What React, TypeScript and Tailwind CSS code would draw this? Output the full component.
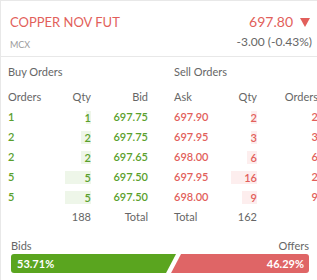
import React from "react";

const buys = [
  { orders: 1, qty: 1, price: "697.75" },
  { orders: 2, qty: 2, price: "697.75" },
  { orders: 2, qty: 2, price: "697.65" },
  { orders: 5, qty: 5, price: "697.50" },
  { orders: 5, qty: 5, price: "697.50" },
];
const sells = [
  { orders: 2, qty: 2, price: "697.90" },
  { orders: 3, qty: 3, price: "697.95" },
  { orders: 6, qty: 6, price: "698.00" },
  { orders: 2, qty: 16, price: "697.95" },
  { orders: 9, qty: 9, price: "698.00" },
];

export default function App() {
  const maxBuy = Math.max(...buys.map((b) => b.qty));
  const maxSell = Math.max(...sells.map((s) => s.qty));
  return (
    <div className="w-[317px] h-[280px] bg-white border-l border-t border-[#e8e8e8] overflow-hidden font-['Lato',sans-serif] text-[#666]">
      <div className="h-[56px] border-b border-[#e8e8e8] flex justify-between pl-[9px] pr-[7px] pt-[12px]">
        <div className="flex flex-col">
          <div className="text-[13px] leading-[18px] text-[#e25f5b]">COPPER NOV FUT</div>
          <div className="text-[9px] leading-[12px] mt-[8px] text-[#9b9b9b]">MCX</div>
        </div>
        <div className="flex flex-col items-end">
          <div className="flex items-center text-[14px] leading-[18px] text-[#e25f5b]">
            <span>697.80</span>
            <svg width="10" height="9" viewBox="0 0 10 9" className="ml-[7px]">
              <path d="M0 0 L10 0 L5 9 Z" fill="#e25f5b" />
            </svg>
          </div>
          <div className="text-[12px] leading-[14px] mt-[4px] mr-[-2px] text-[#666]">-3.00 (-0.43%)</div>
        </div>
      </div>

      <div className="flex pl-[7px]">
        <div className="w-[140px] shrink-0">
          <div className="text-[11px] leading-[20px] mt-[5px]">Buy Orders</div>
          <div className="grid grid-cols-[40px_43px_57px] text-[11px] leading-[20px] mt-[5px]">
            <div>Orders</div>
            <div className="text-right">Qty</div>
            <div className="text-right">Bid</div>
          </div>
          {buys.map((b, i) => (
            <div key={i} className="grid grid-cols-[40px_43px_57px] text-[11px] leading-[20px] font-semibold text-[#5aa02c]">
              <div>{b.orders}</div>
              <div className="flex justify-end items-center">
                <div className="relative flex justify-end items-center h-[13px]">
                  <div className="absolute right-0 top-0 h-[13px] bg-[#eef6e9]" style={{ width: `${(b.qty / maxBuy) * 26}px` }} />
                  <span className="relative leading-[13px]">{b.qty}</span>
                </div>
              </div>
              <div className="text-right">{b.price}</div>
            </div>
          ))}
          <div className="grid grid-cols-[40px_43px_57px] text-[11px] leading-[20px]">
            <div></div>
            <div className="text-right">188</div>
            <div className="text-right">Total</div>
          </div>
        </div>
        <div className="w-[144px] shrink-0 ml-[26px]">
          <div className="text-[11px] leading-[20px] mt-[5px]">Sell Orders</div>
          <div className="grid grid-cols-[50px_33px_61px] text-[11px] leading-[20px] mt-[5px]">
            <div>Ask</div>
            <div className="text-right">Qty</div>
            <div className="text-right">Orders</div>
          </div>
          {sells.map((s, i) => (
            <div key={i} className="grid grid-cols-[50px_33px_61px] text-[11px] leading-[20px] font-semibold text-[#e25f5b]">
              <div>{s.price}</div>
              <div className="flex justify-end items-center">
                <div className="relative flex justify-end items-center h-[13px]">
                  <div className="absolute right-0 top-0 h-[13px] bg-[#fdeeee]" style={{ width: `${Math.max((s.qty / maxSell) * 26, 6)}px` }} />
                  <span className="relative leading-[13px]">{s.qty}</span>
                </div>
              </div>
              <div className="text-right">{s.orders}</div>
            </div>
          ))}
          <div className="grid grid-cols-[50px_33px_61px] text-[11px] leading-[20px]">
            <div>Total</div>
            <div className="text-right">162</div>
            <div></div>
          </div>
        </div>
      </div>

      <div className="pl-[10px] pr-[8px] mt-[11px]">
        <div className="flex justify-between text-[11px] leading-[16px]">
          <span>Bids</span>
          <span>Offers</span>
        </div>
        <div className="flex h-[19px] text-[11px] font-bold text-white leading-[19px]">
          <div
            className="bg-[#5aa51f] rounded-l-[3px] pl-[6px] shrink-0"
            style={{ width: "calc(53.71% + 5px)", clipPath: "polygon(0 0, 100% 0, calc(100% - 10px) 100%, 0 100%)" }}
          >
            53.71%
          </div>
          <div
            className="bg-[#df6566] rounded-r-[3px] flex-1 ml-[-5px] text-right pr-[5px]"
            style={{ clipPath: "polygon(10px 0, 100% 0, 100% 100%, 0 100%)" }}
          >
            46.29%
          </div>
        </div>
      </div>
    </div>
  );
}
